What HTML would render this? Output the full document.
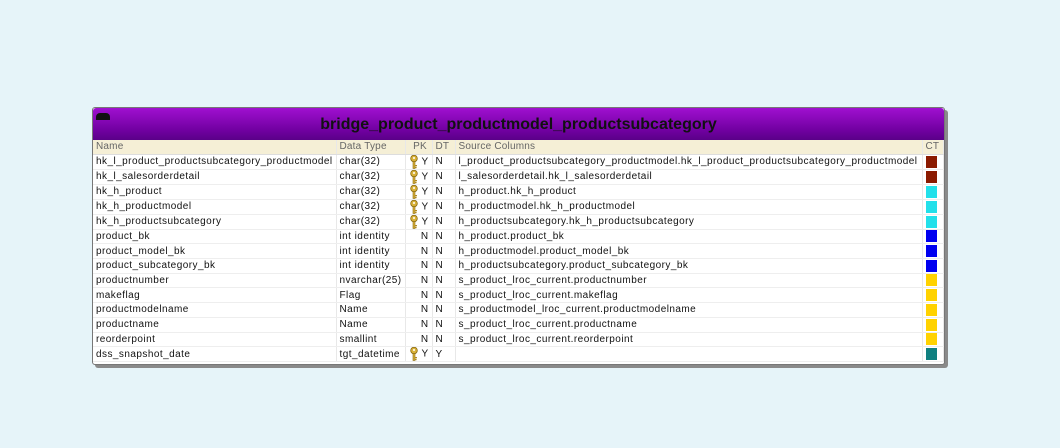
<!DOCTYPE html><html><head><style>
body{margin:0;width:1060px;height:448px;background:#e6f4f9;font-family:"Liberation Sans",sans-serif;position:relative;overflow:hidden}
.box{position:absolute;left:92px;top:107px;width:851px;height:256px;background:#fff;border:1px solid #777;border-radius:3px;box-shadow:3px 3px 0 #8a8a8a}
.hd{height:32px;background:linear-gradient(#a010d0,#7000a0 70%,#5a0088);border-radius:3px 3px 0 0;text-align:center;font-weight:bold;font-size:16px;line-height:34px;color:#111;position:relative}
.ic{position:absolute;left:3px;top:5px;width:14px;height:7px;background:#111;border-radius:4px 4px 0 0}
table{border-collapse:collapse;font-size:10px;color:#111;width:100%;table-layout:fixed}
td{height:13.7px;padding:0 0 0 3px;border-bottom:1px solid #eee;border-right:1px solid #e8e8e8;white-space:nowrap;line-height:13px;letter-spacing:0.45px;overflow:hidden}
tr.h td{background:#f5efd6;color:#666;border-bottom:1px solid #ddd;letter-spacing:0.2px}
.sw{display:inline-block;width:11px;height:12px;vertical-align:middle}
.k{display:inline-block;vertical-align:middle;margin-right:3px}
.n{text-align:right;padding-right:3px}
</style></head><body>
<svg width="0" height="0" style="position:absolute"><defs><symbol id="key" viewBox="0 0 10 14"><circle cx="5" cy="3.5" r="3.3" fill="#d9b23a" stroke="#8a6a10" stroke-width="0.8"/><circle cx="5" cy="3" r="1" fill="#fff"/><rect x="4" y="6.5" width="2" height="7" fill="#d9b23a" stroke="#8a6a10" stroke-width="0.6"/><rect x="6" y="10" width="2" height="1.3" fill="#b08a20"/><rect x="6" y="12" width="1.6" height="1.2" fill="#b08a20"/></symbol></defs></svg>
<div class="box"><div class="hd"><div class="ic"></div>bridge_product_productmodel_productsubcategory</div>
<table>
<colgroup><col style="width:243px"><col style="width:69px"><col style="width:27px"><col style="width:23px"><col style="width:467px"><col></colgroup>
<tr class="h"><td>Name</td><td>Data Type</td><td style="text-align:center">PK</td><td>DT</td><td>Source Columns</td><td>CT</td></tr>
<tr><td>hk_l_product_productsubcategory_productmodel</td><td>char(32)</td><td><svg class="k" width="10" height="14"><use href="#key"/></svg>Y</td><td>N</td><td>l_product_productsubcategory_productmodel.hk_l_product_productsubcategory_productmodel</td><td><span class="sw" style="background:#8b1a00"></span></td></tr>
<tr><td>hk_l_salesorderdetail</td><td>char(32)</td><td><svg class="k" width="10" height="14"><use href="#key"/></svg>Y</td><td>N</td><td>l_salesorderdetail.hk_l_salesorderdetail</td><td><span class="sw" style="background:#8b1a00"></span></td></tr>
<tr><td>hk_h_product</td><td>char(32)</td><td><svg class="k" width="10" height="14"><use href="#key"/></svg>Y</td><td>N</td><td>h_product.hk_h_product</td><td><span class="sw" style="background:#22e0ea"></span></td></tr>
<tr><td>hk_h_productmodel</td><td>char(32)</td><td><svg class="k" width="10" height="14"><use href="#key"/></svg>Y</td><td>N</td><td>h_productmodel.hk_h_productmodel</td><td><span class="sw" style="background:#22e0ea"></span></td></tr>
<tr><td>hk_h_productsubcategory</td><td>char(32)</td><td><svg class="k" width="10" height="14"><use href="#key"/></svg>Y</td><td>N</td><td>h_productsubcategory.hk_h_productsubcategory</td><td><span class="sw" style="background:#22e0ea"></span></td></tr>
<tr><td>product_bk</td><td>int identity</td><td class="n">N</td><td>N</td><td>h_product.product_bk</td><td><span class="sw" style="background:#0000f0"></span></td></tr>
<tr><td>product_model_bk</td><td>int identity</td><td class="n">N</td><td>N</td><td>h_productmodel.product_model_bk</td><td><span class="sw" style="background:#0000f0"></span></td></tr>
<tr><td>product_subcategory_bk</td><td>int identity</td><td class="n">N</td><td>N</td><td>h_productsubcategory.product_subcategory_bk</td><td><span class="sw" style="background:#0000f0"></span></td></tr>
<tr><td>productnumber</td><td>nvarchar(25)</td><td class="n">N</td><td>N</td><td>s_product_lroc_current.productnumber</td><td><span class="sw" style="background:#ffd200"></span></td></tr>
<tr><td>makeflag</td><td>Flag</td><td class="n">N</td><td>N</td><td>s_product_lroc_current.makeflag</td><td><span class="sw" style="background:#ffd200"></span></td></tr>
<tr><td>productmodelname</td><td>Name</td><td class="n">N</td><td>N</td><td>s_productmodel_lroc_current.productmodelname</td><td><span class="sw" style="background:#ffd200"></span></td></tr>
<tr><td>productname</td><td>Name</td><td class="n">N</td><td>N</td><td>s_product_lroc_current.productname</td><td><span class="sw" style="background:#ffd200"></span></td></tr>
<tr><td>reorderpoint</td><td>smallint</td><td class="n">N</td><td>N</td><td>s_product_lroc_current.reorderpoint</td><td><span class="sw" style="background:#ffd200"></span></td></tr>
<tr><td>dss_snapshot_date</td><td>tgt_datetime</td><td><svg class="k" width="10" height="14"><use href="#key"/></svg>Y</td><td>Y</td><td></td><td><span class="sw" style="background:#108080"></span></td></tr>
</table></div>
</body></html>
